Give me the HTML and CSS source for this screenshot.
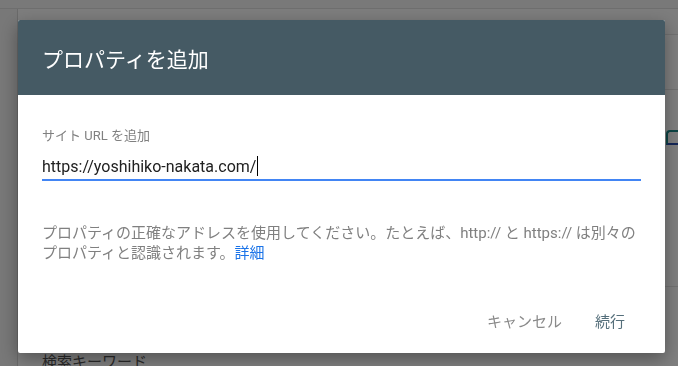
FILE: index.html
```html
<!DOCTYPE html>
<html lang="ja">
<head>
    <meta charset="UTF-8">
    <meta name="viewport" content="width=device-width, initial-scale=1.0">
    <title>プロパティを追加</title>
    <link rel="stylesheet" href="styles.css">
</head>
<body>
    <div class="page">
        <div class="topbar"></div>
        <div class="layout">
            <aside class="sidebar"></aside>
            <main class="main">
                <div class="row row-head"></div>
                <div class="row row-a"></div>
                <div class="row row-b">
                    <span class="tab-mark"></span>
                </div>
                <div class="row row-c"></div>
                <div class="row row-d"></div>
                <div class="keyword">検索キーワード</div>
            </main>
        </div>
    </div>

    <div class="overlay"></div>

    <div class="dialog">
        <div class="dialog-header">プロパティを追加</div>
        <div class="dialog-body">
            <label class="field-label" for="site-url">サイト URL を追加</label>
            <div class="field">
                <span class="field-value" id="site-url">https://yoshihiko-nakata.com/</span><span class="caret"></span>
            </div>
            <p class="help">プロパティの正確なアドレスを使用してください。たとえば、http:// と https:// は別々の<br>プロパティと認識されます。<a href="#">詳細</a></p>
        </div>
        <div class="dialog-actions">
            <button class="btn btn-cancel">キャンセル</button>
            <button class="btn btn-ok">続行</button>
        </div>
    </div>
</body>
</html>
```

FILE: styles.css
```css
* {
    box-sizing: border-box;
}
body {
    margin: 0;
    font-family: Roboto, "Noto Sans CJK JP", sans-serif;
    background: #fff;
    overflow: hidden;
}
.page {
    height: 366px;
}
.topbar {
    height: 9px;
    background: #f2f2f2;
    border-bottom: 1px solid #dcdcdc;
}
.layout {
    display: flex;
    height: 357px;
}
.sidebar {
    width: 18px;
    background: #f0f0f0;
    border-right: 1px solid #d4d4d4;
}
.main {
    flex: 1;
}
.row {
    border-bottom: 1px solid #e4e4e4;
}
.row-head {
    height: 26px;
    background: #fafafa;
}
.row-a {
    height: 55px;
}
.row-b {
    height: 110px;
    display: flex;
    justify-content: flex-end;
    padding-top: 40px;
    border-bottom: none;
}
.tab-mark {
    width: 12px;
    height: 15px;
    border-top: 2px solid #1a8a8a;
    border-left: 2px solid #1a8a8a;
    border-radius: 4px 0 0 0;
    border-bottom: 2px solid #2a4fb0;
}
.row-c {
    height: 87px;
}
.row-d {
    height: 63px;
    border-bottom: none;
}
.keyword {
    padding-left: 24px;
    font-size: 15px;
    color: #555;
}

.overlay {
    position: fixed;
    inset: 0;
    background: rgba(0, 0, 0, 0.5);
}

.dialog {
    position: fixed;
    left: 18px;
    top: 20px;
    width: 647px;
    height: 333px;
    background: #fff;
    border-radius: 2px;
    box-shadow: 0 6px 18px rgba(0, 0, 0, 0.35);
    display: flex;
    flex-direction: column;
    overflow: hidden;
}
.dialog-header {
    height: 75px;
    background: #455a64;
    color: #fff;
    font-size: 21px;
    padding: 0 24px;
    display: flex;
    align-items: center;
}
.dialog-body {
    padding: 33px 24px 0;
}
.field-label {
    display: block;
    font-size: 13px;
    line-height: 16px;
    color: #808080;
    margin-bottom: 11px;
}
.field {
    display: flex;
    align-items: center;
    height: 26px;
    border-bottom: 2px solid #4285f4;
    padding-bottom: 2px;
}
.field-value {
    font-size: 16px;
    color: #212121;
}
.caret {
    width: 1px;
    height: 20px;
    background: #000;
    margin-left: 1px;
}
.help {
    margin: 42px 0 0;
    font-size: 15px;
    line-height: 20px;
    color: #808080;
}
.help a {
    color: #1a73e8;
    text-decoration: none;
}
.dialog-actions {
    margin-top: auto;
    display: flex;
    justify-content: flex-end;
    gap: 17px;
    padding: 0 32px 15px 0;
}
.btn {
    background: none;
    border: none;
    font-family: inherit;
    font-size: 15px;
    height: 36px;
    padding: 0 8px;
    cursor: pointer;
}
.btn-cancel {
    color: #8a8a8a;
}
.btn-ok {
    color: #546e7a;
}
```
